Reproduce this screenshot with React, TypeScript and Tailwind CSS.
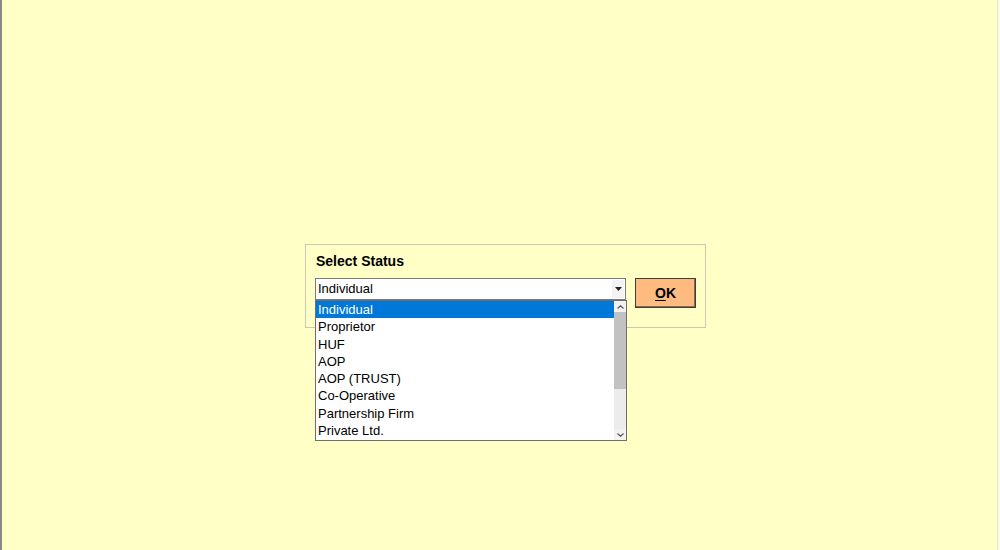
import React from "react";

const items = [
  "Individual",
  "Proprietor",
  "HUF",
  "AOP",
  "AOP (TRUST)",
  "Co-Operative",
  "Partnership Firm",
  "Private Ltd.",
];

export default function App() {
  return (
    <div
      className="w-[1000px] h-[550px] bg-[#ffffc6] border-l-2 border-[#8a8a84] relative overflow-hidden"
      style={{ fontFamily: '"Liberation Sans", Arial, sans-serif' }}
    >
      <div className="absolute right-0 top-0 h-full w-[3px] bg-[#fbfbee] border-l border-[#e6e6c8]" />
      <div className="pl-[303px] pt-[244px]">
        <div className="w-[401px] h-[84px] border border-[#c9c9b2] pl-[9px] pt-[8px] relative">
          <div className="text-[14px] font-bold text-black leading-[17px] pl-[1px]">Select Status</div>
          <div className="flex items-start mt-[8px]">
            <div className="relative w-[311px] h-[22px] bg-white border border-[#7a7a7a] flex items-center">
              <span className="text-[13px] text-black pl-[2px] leading-[16px]">Individual</span>
              <div className="absolute right-[1px] top-[1px] w-[12px] h-[18px] flex items-center justify-center bg-[#f3f3f3]">
                <svg width="7" height="4" viewBox="0 0 7 4">
                  <path d="M0 0 L7 0 L3.5 4 Z" fill="#222" />
                </svg>
              </div>
              {/* Dropdown list */}
              <div className="absolute left-[-1px] top-[21px] w-[312px] h-[141px] bg-white border border-[#6e6e6e] z-10 flex">
                <div className="flex-1">
                  {items.map((it, i) => (
                    <div
                      key={it}
                      className={
                        i === 0
                          ? "h-[17.3px] leading-[17px] text-[13px] pl-[2px] bg-[#0078d7] text-white"
                          : "h-[17.3px] leading-[17px] text-[13px] pl-[2px] text-black"
                      }
                    >
                      {it}
                    </div>
                  ))}
                </div>
                <div className="w-[12px] flex flex-col bg-[#ececec]">
                  <div className="h-[11px] flex items-center justify-center bg-[#f2f2f2]">
                    <svg width="7" height="4" viewBox="0 0 7 4">
                      <path d="M0.5 3.5 L3.5 0.8 L6.5 3.5" fill="none" stroke="#555" strokeWidth="1.2" />
                    </svg>
                  </div>
                  <div className="h-[77px] bg-[#c2c2c2]" />
                  <div className="flex-1" />
                  <div className="h-[11px] flex items-center justify-center bg-[#f2f2f2]">
                    <svg width="7" height="4" viewBox="0 0 7 4">
                      <path d="M0.5 0.5 L3.5 3.2 L6.5 0.5" fill="none" stroke="#555" strokeWidth="1.2" />
                    </svg>
                  </div>
                </div>
              </div>
            </div>
            <button className="ml-[9px] w-[61px] h-[30px] bg-[#fdbb7f] border border-[#3c3c3c] shadow-[inset_-1px_-1px_0_#8a6a4a] flex items-center justify-center text-[14px] font-bold text-black">
              <span>
                <span className="underline underline-offset-2">O</span>K
              </span>
            </button>
          </div>
        </div>
      </div>
    </div>
  );
}
